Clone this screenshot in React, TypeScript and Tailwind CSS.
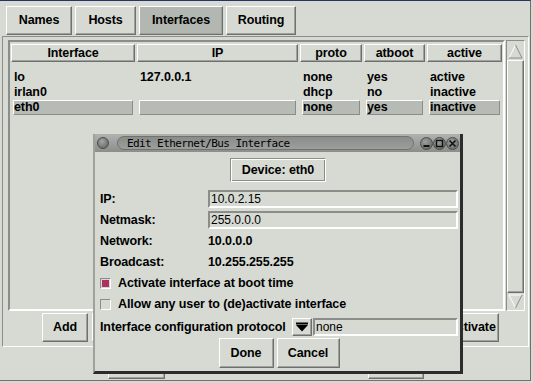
import React from "react";

const raised =
  "border border-t-white border-l-white border-r-[#6e706d] border-b-[#6e706d] shadow-[inset_-1px_-1px_0_#9fa19e]";
const sunken = "border border-t-[#8b8d8a] border-l-[#8b8d8a] border-r-white border-b-white";

const columns = [
  { key: "iface", title: "Interface", w: "w-[124px]" },
  { key: "ip", title: "IP", w: "w-[161px]" },
  { key: "proto", title: "proto", w: "w-[62px]" },
  { key: "atboot", title: "atboot", w: "w-[61px]" },
  { key: "active", title: "active", w: "w-[75px]" },
];

const rows = [
  { iface: "lo", ip: "127.0.0.1", proto: "none", atboot: "yes", active: "active" },
  { iface: "irlan0", ip: "", proto: "dhcp", atboot: "no", active: "inactive" },
  { iface: "eth0", ip: "", proto: "none", atboot: "yes", active: "inactive", selected: true },
];

function Tab({ label, width, pressed }: { label: string; width: string; pressed?: boolean }) {
  return (
    <div
      className={`${width} h-[29px] flex items-center justify-center ${raised} ${
        pressed ? "bg-[#b3b7b1]" : "bg-[#d6dad3]"
      }`}
    >
      {label}
    </div>
  );
}

// label is optional: buttons hidden under the dialog show nothing
function Button({ label, className = "" }: { label?: string; className?: string }) {
  return (
    <div className={`h-full flex items-center justify-center whitespace-nowrap overflow-hidden ${raised} ${className}`}>
      {label}
    </div>
  );
}

function Arrow({ down }: { down?: boolean }) {
  return (
    <div className="h-[17px] w-[17px] flex items-center justify-center">
      <svg width="15" height="15" viewBox="0 0 15 15">
        {down ? (
          <>
            <polygon points="1,1 14,1 7.5,14" fill="#d6dad3" />
            <line x1="1" y1="1" x2="14" y2="1" stroke="#ffffff" />
            <line x1="1" y1="1" x2="7.5" y2="14" stroke="#ffffff" />
            <line x1="14" y1="1" x2="7.5" y2="14" stroke="#8b8d8a" />
          </>
        ) : (
          <>
            <polygon points="7.5,1 14,14 1,14" fill="#d6dad3" />
            <line x1="7.5" y1="1" x2="1" y2="14" stroke="#ffffff" />
            <line x1="7.5" y1="1" x2="14" y2="14" stroke="#8b8d8a" />
            <line x1="1" y1="14" x2="14" y2="14" stroke="#8b8d8a" />
          </>
        )}
      </svg>
    </div>
  );
}

function WinButton({ kind }: { kind: "min" | "max" | "close" }) {
  return (
    <div className="w-[13px] h-[13px] rounded-full bg-[radial-gradient(circle_at_40%_35%,#9c9e9c,#5f615f)] border border-[#4b4d4b] flex items-center justify-center">
      <svg width="9" height="9" viewBox="0 0 9 9">
        {kind === "min" && <rect x="1.5" y="6" width="6" height="2" fill="#111" />}
        {kind === "max" && <rect x="1.5" y="1.5" width="6" height="6" fill="none" stroke="#111" strokeWidth="1.4" />}
        {kind === "close" && (
          <path d="M1.5 1.5 L7.5 7.5 M7.5 1.5 L1.5 7.5" stroke="#111" strokeWidth="1.6" />
        )}
      </svg>
    </div>
  );
}

function Field({ value }: { value: string }) {
  return (
    <div className="flex-1 h-[18px] border-2 border-t-[#8b8d8a] border-l-[#8b8d8a] border-r-white border-b-white flex items-center pl-[1px] font-normal text-[12px] tracking-normal">
      {value}
    </div>
  );
}

function Check({ checked, label }: { checked?: boolean; label: string }) {
  return (
    <div className="h-[21px] flex items-center gap-[7px]">
      <div className={`w-[11px] h-[11px] ${sunken} p-[1px]`}>
        {checked && <div className="w-full h-full bg-[#b0305f]" />}
      </div>
      <span>{label}</span>
    </div>
  );
}

export default function App() {
  return (
    <div className="w-[533px] h-[383px] bg-[#d6dad3] overflow-hidden relative font-['Liberation_Sans',Arial,sans-serif] text-[12.5px] font-bold tracking-[-0.1px] text-black leading-none">
      <div className="h-[381px] w-[531px] border-t border-t-[#27336b] border-r border-b border-r-[#6f716e] border-b-[#6f716e] flex flex-col">
        {/* notebook tabs */}
        <div className="h-[35px] flex gap-[3px] pl-[6px] pt-[5px]">
          <Tab label="Names" width="w-[66px]" />
          <Tab label="Hosts" width="w-[61px]" />
          <Tab label="Interfaces" width="w-[84px]" pressed />
          <Tab label="Routing" width="w-[70px]" />
        </div>

        {/* interfaces page */}
        <div className={`ml-[2px] mr-px h-[311px] ${sunken} flex flex-col pt-[3px] pl-[5px] pr-[3px]`}>
          <div className="flex h-[271px]">
            <div className="w-[497px] h-full border-2 border-t-[#8b8d8a] border-l-[#8b8d8a] border-r-white border-b-white pt-[2px] pl-px">
              <div className="flex gap-[2px] h-[18px]">
                {columns.map((c) => (
                  <div key={c.key} className={`${c.w} h-full flex items-center justify-center ${raised}`}>
                    {c.title}
                  </div>
                ))}
              </div>
              <div className="mt-[8px]">
                {rows.map((r) => (
                  <div key={r.iface} className="flex gap-[2px] h-[15px]">
                    {columns.map((c) => (
                      <div key={c.key} className={`${c.w} h-full px-[2px]`}>
                        <div
                          className={`h-full border leading-[13px] whitespace-nowrap ${
                            r.selected
                              ? "bg-[#b7bbb5] border-t-white border-l-white border-r-[#8b8d8a] border-b-[#8b8d8a]"
                              : "border-transparent"
                          }`}
                        >
                          {(r as Record<string, string | boolean>)[c.key] as string}
                        </div>
                      </div>
                    ))}
                  </div>
                ))}
              </div>
            </div>
            {/* scrollbar */}
            <div className={`ml-px w-[19px] h-full ${sunken} flex flex-col pt-[2px]`}>
              <Arrow />
              <div className={`flex-1 ${raised}`} />
              <Arrow down />
            </div>
          </div>
          <div className="mt-[2px] h-[29px] flex gap-[4px] pl-[34px] pr-[26px]">
            <Button label="Add" className="w-[46px]" />
            <Button className="flex-1" />
            <Button className="flex-1" />
            <Button className="flex-1" />
            <Button className="flex-1" />
            <Button className="flex-1" />
            <Button label="Deactivate" className="w-[68px]" />
          </div>
        </div>

        {/* main window buttons, hidden under the dialog */}
        <div className="flex-1 flex pt-[3px] pb-px pl-[108px] gap-[203px]">
          <Button className="w-[57px]" />
          <Button className="w-[56px]" />
        </div>
      </div>

      {/* Edit dialog */}
      <div className="absolute left-[93px] top-[134px] w-[370px] h-[240px] bg-[#d6dad3] border-l-2 border-l-[#9fa19e] border-r-[3px] border-r-[#2b2c2b] border-b-[3px] border-b-[#2b2c2b] flex flex-col">
        <div className="h-[18px] bg-gradient-to-b from-[#b0b2b0] to-[#8c8e8c] flex items-center pl-[2px]">
          <div className="w-[12px] h-[12px] rounded-full bg-[radial-gradient(circle_at_40%_35%,#a4a6a4,#5a5c5a)] border border-[#4b4d4b]" />
          <div className="ml-[8px] w-[297px] h-[14px] rounded-full bg-gradient-to-b from-[#8a8c8a] to-[#9c9e9c] border border-[#707270] flex items-center pl-[9px] font-['DejaVu_Sans_Mono',monospace] font-normal text-[11px] tracking-[-0.6px] text-black">
            Edit Ethernet/Bus Interface
          </div>
          <div className="ml-[6px] flex">
            <WinButton kind="min" />
            <WinButton kind="max" />
            <WinButton kind="close" />
          </div>
        </div>

        <div className="flex-1 flex flex-col pl-[5px] pr-[2px]">
          <div className="mt-[6px] h-[24px] w-[96px] self-center ml-[-2px] flex items-center justify-center border border-t-[#8b8d8a] border-l-[#8b8d8a] border-r-white border-b-white shadow-[inset_1px_1px_0_#ffffff,inset_-1px_-1px_0_#8b8d8a]">
            Device: eth0
          </div>
          <div className="mt-[8px] flex items-center h-[18px]">
            <span className="w-[108px]">IP:</span>
            <Field value="10.0.2.15" />
          </div>
          <div className="mt-[3px] flex items-center h-[18px]">
            <span className="w-[108px]">Netmask:</span>
            <Field value="255.0.0.0" />
          </div>
          <div className="mt-[2px] flex h-[21px] items-center">
            <span className="w-[108px]">Network:</span>
            <span>10.0.0.0</span>
          </div>
          <div className="flex h-[21px] items-center">
            <span className="w-[108px]">Broadcast:</span>
            <span>10.255.255.255</span>
          </div>
          <Check checked label="Activate interface at boot time" />
          <Check label="Allow any user to (de)activate interface" />
          <div className="mt-[3px] flex items-center h-[18px]">
            <span className="w-[192px] whitespace-nowrap">Interface configuration protocol</span>
            <div className={`w-[20px] h-[18px] ${raised} flex items-center justify-center`}>
              <svg width="14" height="10" viewBox="0 0 14 10">
                <rect x="1" y="0.5" width="12" height="2" fill="#000" />
                <polygon points="1,3 13,3 7,9.5" fill="#000" />
              </svg>
            </div>
            <div className="ml-px flex-1 flex">
              <Field value="none" />
            </div>
          </div>
          <div className="mt-[2px] h-[30px] flex justify-center gap-[3px]">
            <Button label="Done" className="w-[55px]" />
            <Button label="Cancel" className="w-[63px]" />
          </div>
        </div>
      </div>
    </div>
  );
}
